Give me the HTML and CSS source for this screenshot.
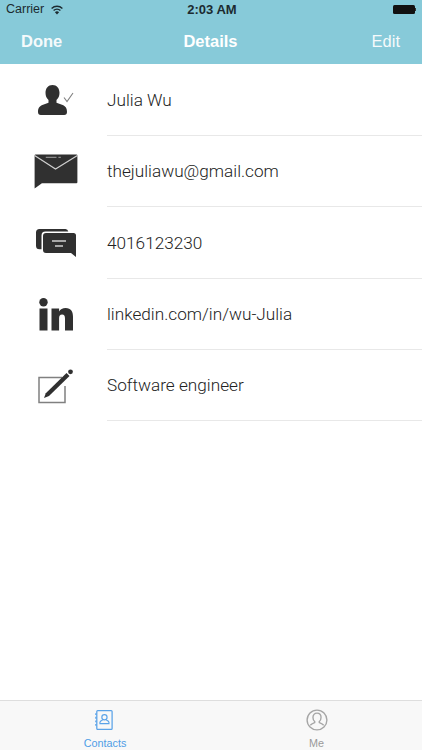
FILE: index.html
```html
<!DOCTYPE html>
<html lang="en">
<head>
  <meta charset="UTF-8">
  <meta name="viewport" content="width=device-width, initial-scale=1">
  <title>Details</title>
  <link rel="stylesheet" href="styles.css">
</head>
<body>
  <div class="app">
    <header class="top">
      <div class="status">
        <div class="status-left">
          <span>Carrier</span>
          <svg class="wifi" width="14" height="11" viewBox="0 0 14 11">
            <path d="M7 10.500 4.900 8.200a3 3 0 0 1 4.200 0Z" fill="#1c2a30"/>
            <path d="M3.600 6.600a5 5 0 0 1 6.800 0M1.600 4.400a8 8 0 0 1 10.800 0" fill="none" stroke="#1c2a30" stroke-width="1.400"/>
          </svg>
        </div>
        <span class="clock">2:03 AM</span>
        <div class="battery"><span class="battery-body"></span><span class="battery-tip"></span></div>
      </div>
      <nav class="nav">
        <span class="nav-side">Done</span>
        <span class="nav-title">Details</span>
        <span class="nav-side nav-edit">Edit</span>
      </nav>
    </header>

    <main class="list">
      <div class="row">
        <div class="row-icon">
          <svg width="36" height="31" viewBox="0 0 36 31">
            <path d="M14.500 0c4.300 0 7 3.300 7 7.800 0 3-1.100 5.600-3 7.300v2.600l5.500 2c3.800 1.400 5 3.400 5 7.300 0 1.900-1 3-2.800 3H2.800C1 30 0 28.900 0 27c0-3.900 1.200-5.900 5-7.300l5.500-2v-2.600c-1.900-1.700-3-4.300-3-7.300C7.500 3.300 10.200 0 14.500 0Z" fill="#303030"/>
            <path d="m26 12.500 3 4 6-8.500" fill="none" stroke="#808080" stroke-width="1.100"/>
          </svg>
        </div>
        <div class="row-text">Julia Wu</div>
      </div>
      <div class="row">
        <div class="row-icon">
          <svg class="icon-mail" width="44" height="35" viewBox="0 0 45 36">
            <path d="M1.500 0.500h42a1 1 0 0 1 1 1v27.500a1 1 0 0 1-1 1H8L0.500 35.500V1.500a1 1 0 0 1 1-1Z" fill="#303030"/>
            <path d="M0.500 1.500 22 15.500 44.500 1.500" fill="none" stroke="#cfcfcf" stroke-width="1.200"/>
            <path d="M12 3.500h11M25 3.500h2.500" stroke="#8c8c8c" stroke-width="1.300"/>
          </svg>
        </div>
        <div class="row-text">thejuliawu@gmail.com</div>
      </div>
      <div class="row">
        <div class="row-icon">
          <svg width="40" height="28" viewBox="0 0 40 28">
            <path d="M3.500 0h26a3.500 3.500 0 0 1 2.800 2.500H9.500A4 4 0 0 0 5.500 6.500v13.700H3.500A3.500 3.500 0 0 1 0 16.700V3.500A3.500 3.500 0 0 1 3.500 0Z" fill="#303030"/>
            <path d="M10 4h27.500a2.500 2.500 0 0 1 2.500 2.500V28l-5-4H10a3 3 0 0 1-3-3V7a3 3 0 0 1 3-3Z" fill="#303030"/>
            <path d="M16 12h14M19 17h8" stroke="#cfcfcf" stroke-width="1.300"/>
          </svg>
        </div>
        <div class="row-text">4016123230</div>
      </div>
      <div class="row">
        <div class="row-icon">
          <svg width="34" height="33" viewBox="0 0 34 33">
            <circle cx="4.500" cy="4.300" r="4.200" fill="#303030"/>
            <rect x="0.500" y="10.500" width="8" height="22" fill="#303030"/>
            <path d="M12.500 10.500h7.600v3c1.200-2 3.500-3.500 6.500-3.500 5.500 0 7.400 3.500 7.400 8.800V32.500h-8V20.500c0-2.500-.8-4-2.900-4-2.200 0-3 1.600-3 4v12h-7.600Z" fill="#303030"/>
          </svg>
        </div>
        <div class="row-text">linkedin.com/in/wu-Julia</div>
      </div>
      <div class="row">
        <div class="row-icon">
          <svg width="36" height="36" viewBox="0 0 36 36">
            <path d="M24 9.500H1v25h26V18" fill="none" stroke="#808080" stroke-width="1.500"/>
            <path d="m6 30 1.800-4.800L28.500 5l3 3-20.500 20Z" fill="#303030"/>
            <circle cx="32.500" cy="3.800" r="2.400" fill="#303030"/>
          </svg>
        </div>
        <div class="row-text">Software engineer</div>
      </div>
    </main>

    <footer class="tabs">
      <div class="tab tab-on">
        <svg class="tab-book" width="18" height="22" viewBox="0 0 20 23">
          <rect x="2" y="1" width="17" height="21" rx="1" fill="none" stroke="#5ba3e8" stroke-width="1.400"/>
          <path d="M1 4v2M1 8v2M1 12v2M1 16v2" stroke="#5ba3e8" stroke-width="1.500"/>
          <circle cx="10.500" cy="8.500" r="2.900" fill="none" stroke="#5ba3e8" stroke-width="1.300"/>
          <path d="M8.500 11.500c-1.500.6-3 1.200-3 2.500v1.500h10V14c0-1.300-1.500-1.900-3-2.500" fill="none" stroke="#5ba3e8" stroke-width="1.300"/>
        </svg>
        <span>Contacts</span>
      </div>
      <div class="tab">
        <svg width="22" height="22" viewBox="0 0 24 24">
          <circle cx="12" cy="12" r="10.800" fill="none" stroke="#a6a6a6" stroke-width="1.500"/>
          <path d="M12 4.500c2.800 0 4.400 2 4.400 4.700 0 2-.8 3.500-1.900 4.500v1.200c2 .8 3.800 1.500 4.800 2.800M12 4.500c-2.800 0-4.400 2-4.400 4.700 0 2 .8 3.500 1.900 4.500v1.200c-2 .8-3.800 1.500-4.800 2.800" fill="none" stroke="#a6a6a6" stroke-width="1.500"/>
        </svg>
        <span>Me</span>
      </div>
    </footer>
  </div>
</body>
</html>
```

FILE: styles.css
```css
html, body {
  margin: 0;
  height: 100%;
}
body {
  font-family: "Liberation Sans", Arial, sans-serif;
  background-color: #fff;
  color: #333;
}
.app {
  height: 750px;
  display: flex;
  flex-direction: column;
}
.top {
  height: 64px;
  background-color: #87cad9;
  display: flex;
  flex-direction: column;
}
.status {
  height: 18px;
  padding: 0 6px;
  display: grid;
  grid-template-columns: 1fr auto 1fr;
  align-items: center;
  font-size: 12.500px;
  color: #1c2a30;
}
.status-left {
  display: flex;
  align-items: center;
  gap: 6px;
}
.clock {
  font-weight: bold;
  font-size: 13px;
  padding-left: 2px;
}
.battery {
  display: flex;
  align-items: center;
  justify-content: flex-end;
}
.battery-body {
  width: 22px;
  height: 9px;
  background-color: #111;
  border-radius: 1.500px;
}
.battery-tip {
  width: 1.500px;
  height: 3px;
  background-color: #333;
}
.nav {
  flex: 1;
  padding: 0 22px 0 21px;
  display: grid;
  grid-template-columns: 1fr auto 1fr;
  align-items: center;
  font-size: 16.500px;
  color: #fff;
}
.nav-side {
  font-weight: bold;
  opacity: 0.92;
}
.nav-edit {
  font-weight: normal;
  text-align: right;
}
.nav-title {
  font-weight: bold;
}
.list {
  flex: 1;
  padding-top: 0.700px;
}
.row {
  height: 71.330px;
  display: flex;
}
.row-icon {
  width: 107px;
  padding-left: 5px;
  box-sizing: border-box;
  display: flex;
  align-items: center;
  justify-content: center;
}
.icon-mail {
  margin-left: -1px;
}
.row-text {
  flex: 1;
  display: flex;
  align-items: center;
  font-family: Roboto, sans-serif;
  font-weight: 300;
  font-size: 17.200px;
  color: #222;
  border-bottom: 1px solid #e8e8e8;
}
.tabs {
  height: 50px;
  box-sizing: border-box;
  background-color: #f8f8f8;
  border-top: 1px solid #dedede;
  display: flex;
  justify-content: space-around;
  padding: 8px 0 0;
}
.tab {
  width: 211px;
  display: flex;
  flex-direction: column;
  align-items: center;
  gap: 6px;
  font-size: 10.800px;
  color: #9a9a9a;
}
.tab-on {
  color: #4f9de6;
  padding-right: 1px;
  box-sizing: border-box;
}
.tab-book {
  margin-right: 2px;
}
```
